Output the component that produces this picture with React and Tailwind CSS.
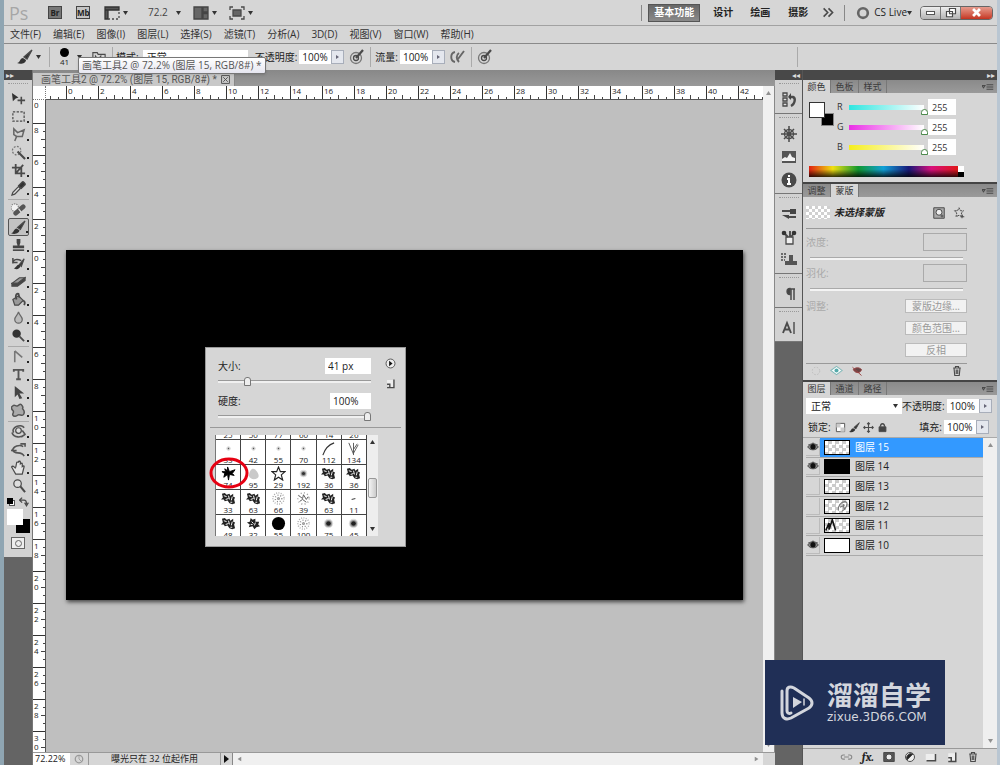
import React, { useState } from "react";

const Svg = ({ size = 16, children, className = "" }) => (
  <svg
    width={size}
    height={size}
    viewBox="0 0 16 16"
    fill="none"
    stroke="#4a4a4a"
    strokeWidth="1.3"
    className={"shrink-0 " + className}
    aria-hidden="true">
    {children}
  </svg>
);

const Caret = ({ className = "" }) => (
  <svg width="5" height="4" viewBox="0 0 5 4" className={"shrink-0 " + className} aria-hidden="true">
    <path d="M0 0h5L2.5 4z" fill="#333" />
  </svg>
);

const toolGroups = [
  [
    ["移动", <><path d="M1 2l7 5-3 1-3 3z" fill="#333" stroke="none" /><path d="M11 6v8M7 10h8" strokeWidth="1.700" /></>],
    ["选框", <rect x="2" y="3" width="12" height="10" strokeDasharray="2.500 1.500" />],
    ["套索", <><path d="M3 2l4 4 7-3-2 7-6 0-3-2zM6 10l-2 5" strokeWidth="1.600" stroke="#666" /></>],
    ["魔棒", <><circle cx="6" cy="6" r="4.500" strokeDasharray="2 1.500" stroke="#777" /><path d="M7 7l8 8" strokeWidth="2.200" /></>],
    ["裁剪", <path d="M5 1v10h10M1 5h10v10M5 11l8-9" strokeWidth="1.900" />],
    ["吸管", <><path d="M1 15l1-3 6-6 2 2-6 6z" fill="#ddd" /><path d="M8 5l3 3 4-4c1-1-2-4-3-3z" fill="#333" /></>],
  ],
  [
    ["修复画笔", <><circle cx="4" cy="6" r="4" fill="#f2f2f2" stroke="#888" strokeDasharray="1.500 1" /><path d="M5 12l8-7" strokeWidth="5" stroke="#555" strokeLinecap="round" /><path d="M8 7l3 4" stroke="#ddd" /></>],
    ["画笔", <><path d="M15 1L7 8l3 2z" fill="#333" /><path d="M0 14c3 0 3-5 6-5l3 2c0 3-5 5-9 3z" fill="#333" stroke="none" /></>],
    ["图章", <><path d="M6 1h4v4l-1 3h5v3H2V8h5L6 5z" fill="#444" stroke="none" /><path d="M2 13h12" strokeWidth="1.800" /></>],
    ["历史记录画笔", <><path d="M14 3L9 9l2 2z" fill="#333" /><path d="M3 13c2 0 3-4 6-4l1 2c-1 3-4 4-7 2z" fill="#333" stroke="none" /><path d="M2 8c0-5 5-5 9-3M2 2v5h5" strokeWidth="1.600" /></>],
    ["橡皮擦", <><path d="M1 10l8-6h6l-8 6z" fill="#999" /><path d="M1 10h6l8-6v3l-8 6H1z" fill="#444" /></>],
    ["油漆桶", <><path d="M2 8l6-4 5 5-5 5H4z" fill="#999" /><path d="M6 8c-2-4 0-7 2-6l1 4M13 9c2 1 2 3 1 5" strokeWidth="1.900" /></>],
    ["模糊", <path d="M8 2c1 4 4 5 4 8a4 4 0 01-8 0c0-3 3-4 4-8z" fill="#bbb" stroke="#666" />],
    ["减淡", <><circle cx="6" cy="6" r="4.500" fill="#333" stroke="none" /><path d="M9 9l5 5" strokeWidth="1.900" /></>],
  ],
  [
    ["钢笔", <path d="M4 2v12M4 2l8 7" stroke="#777" strokeWidth="1.700" />],
    ["文字", <path d="M3 5V3h10v2M8 3v10M5.500 13h5" stroke="#555" strokeWidth="2" />],
    ["路径选择", <path d="M4 1v12l3-3 2 5 3-1-3-5h5z" fill="#444" stroke="none" />],
    ["自定形状", <path d="M2 3c2-2 3 1 5 0s3-3 5 0-1 2 1 4 1 6-1 6-4-1-5 0-4 2-5 0 2-3 0-5-2-4 0-5z" fill="#aaa" stroke="#555" strokeWidth="1.600" />],
  ],
  [
    ["3D 旋转", <><circle cx="8" cy="7" r="3" fill="#ddd" /><path d="M3 9c-4-5 8-10 11-5M1 9c2 6 10 6 14 2M12 7l3 4-4 3" strokeWidth="1.700" stroke="#555" /></>],
    ["3D 环绕", <><path d="M2 9c0-4 7-7 11-4M2 9c2 5 9 0 12 6M10 2h5v3M4 5L1 9h5" strokeWidth="1.700" stroke="#555" /></>],
    ["抓手", <path d="M5 9L3 7c-1-1-3 0-2 1l4 7h7l2-8c0-1-1-1-2 0V4c0-1-1-1-2 0V2c0-1-2-1-2 0v1c0-1-2-1-2 0l-1 5" fill="#e4e4e4" />],
    ["缩放", <><circle cx="7" cy="6" r="4" fill="#ddd" /><path d="M10 9l5 6" strokeWidth="2.200" /></>],
  ],
];

const dockGroups = [
  [
    ["历史记录", <><path d="M2 1h4v3H2zM2 6h4v3H2zM2 11h4v3H2z" fill="#ddd" /><path d="M8 5h4c3 1 2 7-2 9" strokeWidth="2.400" /><path d="M10 1v7L7 5z" fill="#444" stroke="none" /></>],
  ],
  [
    ["导航器", <><circle cx="8" cy="8" r="4.500" /><circle cx="8" cy="8" r="1.500" fill="#333" /><path d="M8 0v16M0 8h16M3 3l10 10M13 3L3 13" strokeWidth="1.500" /></>],
    ["直方图", <><path d="M1 2h14v12H1z" fill="#555" stroke="none" /><path d="M1 10l3-2 2 1 3-5 2 4 3 1v3H1z" fill="#f2f2f2" stroke="none" /></>],
    ["信息", <><circle cx="8" cy="8" r="7.500" fill="#4a4a4a" stroke="none" /><path d="M8 3v2M6 7h2v5M6 12h4" stroke="#fff" strokeWidth="2" /></>],
  ],
  [
    ["画笔", <><path d="M1 5h8M7 11h8" strokeWidth="1.800" /><path d="M9 3h6v5H9zM1 9h7v4z" fill="#444" stroke="none" /></>],
    ["画笔预设", <><path d="M5 8h7v7H5z" fill="#eee" /><path d="M7 8L3 4M9 8V2M10 8l3-4" strokeWidth="1.900" /><circle cx="13" cy="4" r="2.300" fill="#333" stroke="none" /><circle cx="3" cy="4" r="2.300" fill="#333" stroke="none" /></>],
    ["仿制源", <><path d="M0 2h6M0 5h6M0 8h4" strokeDasharray="2 1" /><path d="M8 3h4v6h4v4H4V9h4z" fill="#555" stroke="none" /></>],
  ],
  [
    ["段落", <><path d="M10 3v11M13 3v11M14 3H8" strokeWidth="1.500" /><path d="M9 2.500a3 3 0 000 6z" fill="#444" /></>],
  ],
  [
    ["字符", <><path d="M2 13L6 3l4 10M3.500 9.500h5" strokeWidth="1.900" /><path d="M13 2v12" strokeWidth="1.400" /></>],
  ],
];

const menus = ["文件(F)", "编辑(E)", "图像(I)", "图层(L)", "选择(S)", "滤镜(T)", "分析(A)", "3D(D)", "视图(V)", "窗口(W)", "帮助(H)"];

const layers = [
  { id: 15, visible: true, kind: "checker" },
  { id: 14, visible: true, kind: "black" },
  { id: 13, visible: false, kind: "checker" },
  { id: 12, visible: false, kind: "leaf" },
  { id: 11, visible: false, kind: "strokes" },
  { id: 10, visible: true, kind: "white" },
];

const brushes = [
  ["dot", 25], ["dot", 50], ["dot", 77], ["dot", 60], ["dot", 14], ["dot", 26],
  ["dot", 33], ["dot", 42], ["dot", 55], ["dot", 70], ["blade", 112], ["grass", 134],
  ["maple", 74], ["shell", 95], ["star", 29], ["soft", 192], ["scatter", 36], ["scatter", 36],
  ["scatter", 33], ["scatter", 63], ["noise", 66], ["noise2", 39], ["scatter", 63], ["dash", 11],
  ["scatter", 48], ["scatter2", 32], ["disc", 55], ["noise", 100], ["soft2", 75], ["soft2", 45],
];

const brushShapes = {
  dot: <><circle cx="8" cy="8" r="1" fill="#555" stroke="none" /><circle cx="8" cy="8" r="1.800" stroke="#ccc" strokeWidth="1" /></>,
  blade: <path d="M2 15C4 9 8 4 14 2" stroke="#333" strokeWidth="1.200" />,
  grass: <path d="M8 15V2M8 14L3 2M8 13l5-9M8 9l4-6" stroke="#555" strokeWidth="1" />,
  maple: <path d="M7 1l2 5 6-2-3 4 2 2-5-1-1 6-1-6-4 3 1-4-3-2 4 0-1-3 3 2z" fill="#000" stroke="#000" strokeWidth="1" />,
  shell: <path d="M3 10c1-6 4-9 7-6s5 7 2 9-8 1-9-3z" fill="#c9c9c9" stroke="none" />,
  star: <path d="M8 1l2 5h5l-4 3.500 1.500 5.500L8 12l-4.500 3L5 9.500 1 6h5z" stroke="#222" strokeWidth="1.200" />,
  soft: <><circle cx="8" cy="8" r="4" fill="#ddd" stroke="none" /><circle cx="8" cy="8" r="2.800" fill="#999" stroke="none" /><circle cx="8" cy="8" r="1.700" fill="#333" stroke="none" /></>,
  soft2: <><circle cx="8" cy="8" r="5" fill="#ddd" stroke="none" /><circle cx="8" cy="8" r="3.800" fill="#999" stroke="none" /><circle cx="8" cy="8" r="2.500" fill="#222" stroke="none" /></>,
  scatter: <><path d="M1 3l3-1 2 2 3-1 1 2 3-2 0 3 2 1-1 2 1 4-3 1-3-1-2-3-3 1-1-2-3 0 2-2z" fill="#222" stroke="none" /><path d="M3 5l3 1M8 5l1 4M5 9l3-1M12 6l-1 4M10 12l2 0" stroke="#fff" strokeWidth="1" /></>,
  scatter2: <><path d="M5 2l2 2 3-1 0 3 4 0-1 3 2 2-4 1-2 2-2-3-4 1 1-3-3-2 3-1z" fill="#222" stroke="none" /><path d="M6 6l2 2M10 7l-1 3M5 9l2 0" stroke="#fff" strokeWidth="1" /></>,
  noise: <><circle cx="8" cy="8" r="6" stroke="#aaa" strokeWidth="1.500" strokeDasharray="1 1.500" /><circle cx="8" cy="8" r="3.500" stroke="#888" strokeWidth="1.500" strokeDasharray="1 2" /><circle cx="8" cy="8" r="1" stroke="#999" /></>,
  noise2: <><circle cx="8" cy="8" r="6" stroke="#999" strokeWidth="1.500" strokeDasharray="1 2.500" /><path d="M3 5l4 3 1-4 3 5 2-3M4 11l3-2 4 3" stroke="#555" strokeWidth="1" /></>,
  dash: <path d="M6 9l4-1" stroke="#444" strokeWidth="1.200" />,
  disc: <circle cx="8" cy="8" r="7" fill="#000" stroke="none" />,
};

const hTicks = Array.from({ length: 22 }, (_, i) => i * 2);
const vTicks = [8, 6, 4, 2, 0, 2, 4, 6, 8, 10, 12, 14, 16, 18, 20, 22, 24, 26, 28, 30];

const TabletIcon = () => (
  <Svg>
    <circle cx="7" cy="9" r="5.500" stroke="#777" />
    <circle cx="7" cy="9" r="2.500" />
    <path d="M7 9l7-8" strokeWidth="2.200" />
  </Svg>
);

const PercentField = ({ label, id }) => (
  <div className="flex items-center">
    <label htmlFor={id} className="mr-[2px] whitespace-nowrap">{label}</label>
    <input id={id} defaultValue="100%" className="h-[14px] w-8 bg-white pl-[3px] text-[10px]" />
    <button aria-label={label} className="flex h-[14px] w-[13px] items-center justify-center border border-[#a8aeba] bg-[#e4e7ee]">
      <svg width="3" height="4" viewBox="0 0 3 4"><path d="M0 0l3 2-3 2z" fill="#667" /></svg>
    </button>
  </div>
);

const TitleBar = () => (
  <header className="flex h-[26px] shrink-0 items-center border-b border-[#a2a2a2] pr-1 pl-[5px]">
    <span className="w-[39px] text-[18px] leading-none text-[#a6a6a6]">Ps</span>
    <button className="mr-[14px] h-[13px] w-[14px] border border-[#444] bg-[#777] text-[8px] leading-none font-bold text-[#222]">Br</button>
    <button className="mr-[14px] h-[13px] w-[14px] border border-[#444] bg-[#c4c4c4] text-[8px] leading-none font-bold text-[#222]">Mb</button>
    <button aria-label="查看额外内容" className="flex items-center gap-[3px]">
      <Svg><path d="M1 2h14v3H1zM1 5h3v9H1z" fill="#555" stroke="#333" /><path d="M4 14h11V5" strokeDasharray="2 2" /></Svg>
      <Caret />
    </button>
    <button className="ml-5 flex items-center gap-2 text-[10px] text-[#444]">72.2<Caret /></button>
    <button aria-label="排列文档" className="ml-3 flex items-center gap-[3px]">
      <Svg><path d="M1 2h8v12H1zM10 2h5v5h-5zM10 8.500h5V14h-5z" fill="#666" stroke="#444" /></Svg>
      <Caret />
    </button>
    <button aria-label="屏幕模式" className="ml-3 flex items-center gap-[3px]">
      <Svg><path d="M4 5h8v6H4z" fill="#666" /><path d="M1 5V2h3M12 2h3v3M15 11v3h-3M4 14H1v-3" /></Svg>
      <Caret />
    </button>
    <div className="ml-auto flex items-center text-[10px] font-bold text-[#222]">
      <span className="mr-[6px] h-4 w-px bg-[#888]" />
      <button className="h-[18px] w-[52px] border border-[#555] bg-gradient-to-b from-[#686868] to-[#8a8a8a] whitespace-nowrap text-white">基本功能</button>
      <button className="ml-[13px]">设计</button>
      <button className="ml-[17px]">绘画</button>
      <button className="ml-[18px]">摄影</button>
      <button aria-label="更多" className="ml-[14px]">
        <Svg size={13}><path d="M2 3l5 5-5 5M8 3l5 5-5 5" strokeWidth="2" /></Svg>
      </button>
      <span className="mr-[11px] ml-[9px] h-4 w-px bg-[#888]" />
      <Svg size={14}><circle cx="8" cy="8" r="5.500" stroke="#666" strokeWidth="3" /></Svg>
      <button className="ml-1 flex items-center font-normal whitespace-nowrap">CS Live<Caret /></button>
      <div className="ml-2 flex h-[14px] overflow-hidden rounded-sm border border-[#666]">
        <button aria-label="最小化" className="flex w-5 items-center justify-center border-r border-[#777] bg-gradient-to-b from-[#eee] to-[#b4b4b4]">
          <span className="h-1 w-[9px] border border-[#555] bg-white" />
        </button>
        <button aria-label="还原" className="flex w-5 items-center justify-center border-r border-[#777] bg-gradient-to-b from-[#eee] to-[#b4b4b4]">
          <Svg size={12}><path d="M6 2h8v7h-8zM2 6h8v7H2z" fill="#fff" strokeWidth="1.600" /></Svg>
        </button>
        <button aria-label="关闭" className="flex w-[31px] items-center justify-center bg-gradient-to-b from-[#e69a8c] to-[#c43320]">
          <Svg size={11}><path d="M3 3l10 10M13 3L3 13" stroke="#fff" strokeWidth="4" /></Svg>
        </button>
      </div>
    </div>
  </header>
);

const MenuBar = () => (
  <nav className="flex h-[18px] shrink-0 items-center gap-3 border-b border-[#8a8a8a] pl-[6px] text-[10px] text-[#333]">
    {menus.map((m) => (
      <button key={m} className="whitespace-nowrap">{m}</button>
    ))}
  </nav>
);

const Divider = () => <span className="h-5 w-px shrink-0 bg-[#aaa]" />;

const OptionsBar = () => (
  <div className="relative flex h-[26px] shrink-0 items-center pl-[13px] text-[10px] text-[#222]">
    <button aria-label="画笔工具" className="flex w-[32px] items-center gap-[3px]">
      <Svg>{toolGroups[1][1][1]}</Svg>
      <Caret />
    </button>
    <Divider />
    <button aria-label="画笔大小" className="flex w-[42px] items-center gap-2 pl-[10px]">
      <span className="flex flex-col items-center text-[8px] leading-[9px]">
        <span className="size-[9px] rounded-full bg-black" />
        41
      </span>
      <Caret />
    </button>
    <button aria-label="切换画笔面板" className="w-[20px]">
      <Svg size={14}><path d="M1 3h5l1 2h8v9H1z" /><path d="M4 12V7l3 4 3-4v5" /></Svg>
    </button>
    <Divider />
    <label htmlFor="mode" className="mr-1 ml-[3px] whitespace-nowrap">模式:</label>
    <select id="mode" className="mr-[7px] h-[14px] w-[105px] appearance-none bg-white pl-1 text-[10px] leading-none">
      <option>正常</option>
    </select>
    <PercentField label="不透明度:" id="opt-opacity" />
    <button aria-label="压力控制不透明度" className="mx-[5px]"><TabletIcon /></button>
    <Divider />
    <span className="w-1" />
    <PercentField label="流量:" id="opt-flow" />
    <button aria-label="喷枪" className="mx-[5px]">
      <Svg><path d="M5 3c-5 1-5 9 0 10M9 13c-3-3-3-7 0-9M8 10l6-8" strokeWidth="1.900" stroke="#666" /></Svg>
    </button>
    <Divider />
    <button aria-label="压力控制大小" className="mx-[5px]"><TabletIcon /></button>
    <span className="mr-[199px] ml-auto h-5 w-px bg-[#aaa]" />
    <div role="tooltip" className="absolute top-[13px] left-[74px] z-20 flex h-[17px] items-center rounded-xs border border-[#777] bg-gradient-to-b from-white to-[#e6e6f0] px-[3px] text-[10px] whitespace-nowrap text-[#555] shadow">
      画笔工具2 @ 72.2% (图层 15, RGB/8#) *
    </div>
  </div>
);

const Toolbox = () => (
  <aside className="flex w-[29px] shrink-0 flex-col border-r border-[#777] bg-[#646464]">
    <div className="flex h-[10px] items-center bg-[#484848] pl-[2px] text-[8px] leading-none text-[#ddd]">▸▸</div>
    <div className="flex flex-col items-center bg-[#d2d2d2] pb-2">
      <div className="mt-[3px] mb-1 h-[2px] w-5 border-t border-dotted border-[#999]" />
      {toolGroups.map((group, i) => (
        <div key={i} className={"flex flex-col " + (i > 0 ? "mt-[2px] border-t border-[#aaa]" : "")}>
          {group.map(([name, icon]) => (
            <button
              key={name}
              aria-label={name}
              className={
                "relative flex h-[18px] w-[21px] items-center justify-center rounded-xs " +
                (name === "画笔" ? "border border-[#555] bg-[#c2c2c2]" : "")
              }>
              <Svg size={15}>{icon}</Svg>
              {name !== "移动" && name !== "缩放" && (
                <span className="absolute right-0 bottom-[2px] size-[2px] bg-[#222]" />
              )}
            </button>
          ))}
        </div>
      ))}
      <div className="flex h-[15px] w-[22px] items-center justify-between">
        <button aria-label="默认颜色" className="relative size-2">
          <span className="absolute right-0 bottom-0 size-[6px] border border-[#555] bg-white" />
          <span className="absolute top-0 left-0 size-[6px] bg-black" />
        </button>
        <button aria-label="切换颜色">
          <Svg size={10}><path d="M2 5h6c3 0 4 2 4 6M5 1L1 5l4 4M9 9l3 5 3-5" strokeWidth="2" /></Svg>
        </button>
      </div>
      <div className="relative h-[26px] w-[23px]">
        <button aria-label="背景色" className="absolute right-0 bottom-[2px] size-[14px] bg-black" />
        <button aria-label="前景色" className="absolute top-0 left-0 size-4 bg-white" />
      </div>
      <button aria-label="快速蒙版" className="mt-[2px] flex h-3 w-[14px] items-center justify-center border border-[#666] bg-[#eee]">
        <span className="size-[7px] rounded-full border border-[#666]" />
      </button>
    </div>
  </aside>
);

const HRuler = () => (
  <div className="flex h-[14px] min-w-0 flex-1 overflow-hidden border-b border-[#555] bg-white text-[8px] leading-[9px] text-[#222]">
    <div className="flex w-5 shrink-0 items-end gap-[7px] pl-1">
      <span className="h-[3px] w-px bg-[#444]" />
      <span className="h-[2px] w-px bg-[#444]" />
    </div>
    {hTicks.map((n) => (
      <div key={n} className="relative w-8 shrink-0 border-l border-[#333] pl-px">
        {n}
        <div className="absolute inset-x-0 bottom-0 flex items-end gap-[7px] pl-[7px]">
          <span className="h-[2px] w-px bg-[#444]" />
          <span className="h-1 w-px bg-[#444]" />
          <span className="h-[2px] w-px bg-[#444]" />
        </div>
      </div>
    ))}
  </div>
);

const VRuler = () => (
  <div className="flex w-[13px] shrink-0 flex-col overflow-hidden border-r border-[#555] bg-white text-[8px] leading-[9px] text-[#222]">
    <div className="h-[23px] shrink-0 pl-px">0</div>
    {vTicks.map((n, i) => (
      <div key={i} className="relative flex h-8 shrink-0 flex-col border-t border-[#333] pt-px pl-px">
        {String(n).split("").map((d, k) => <span key={k}>{d}</span>)}
        <div className="absolute inset-y-0 right-0 flex flex-col items-end gap-[7px] pt-[7px]">
          <span className="h-px w-[2px] bg-[#444]" />
          <span className="h-px w-1 bg-[#444]" />
          <span className="h-px w-[2px] bg-[#444]" />
        </div>
      </div>
    ))}
  </div>
);

const BrushSlider = ({ label, value, unit, width, max }) => {
  const id = "brush-" + unit;
  return (
    <div className="pr-[34px] pl-3">
      <div className="flex h-[16px] items-center justify-between text-[10px]">
        <label htmlFor={id}>{label}</label>
        <input id={id} defaultValue={value} className={"h-4 bg-white pl-[3px] " + width} />
      </div>
      <input
        type="range"
        aria-label={label}
        defaultValue={max}
        className="mt-[3px] block h-[9px] w-full appearance-none bg-transparent [&::-webkit-slider-runnable-track]:h-[3px] [&::-webkit-slider-runnable-track]:border-t [&::-webkit-slider-runnable-track]:border-[#999] [&::-webkit-slider-runnable-track]:bg-[#f0f0f0] [&::-webkit-slider-thumb]:-mt-[4px] [&::-webkit-slider-thumb]:h-[9px] [&::-webkit-slider-thumb]:w-[7px] [&::-webkit-slider-thumb]:appearance-none [&::-webkit-slider-thumb]:rounded-t-[3px] [&::-webkit-slider-thumb]:border [&::-webkit-slider-thumb]:border-[#777] [&::-webkit-slider-thumb]:bg-[#eee]"
      />
    </div>
  );
};

const BrushPicker = () => (
  <div className="absolute top-[97px] left-[139px] h-[200px] w-[201px] border border-[#999] bg-[#d6d6d6] text-[#222]">
    <div className="flex flex-col gap-[7px] pt-[10px]">
      <BrushSlider label="大小:" value="41 px" unit="size" width="w-[46px]" max={18} />
      <BrushSlider label="硬度:" value="100%" unit="hardness" width="w-[41px]" max={100} />
    </div>
    <div className="absolute top-[10px] right-[9px] flex flex-col items-center gap-[9px]">
      <button aria-label="菜单" className="block">
        <Svg size={11}><circle cx="8" cy="8" r="6.500" fill="#eee" /><path d="M6 4l5 4-5 4z" fill="#111" stroke="none" /></Svg>
      </button>
      <button aria-label="新建预设" className="block">
        <Svg size={11}><path d="M3 3h10v10H7L3 9z" fill="#eee" stroke="none" /><path d="M13 2v12H3M3 9h4v4" strokeWidth="2" /></Svg>
      </button>
    </div>
    <div className="mx-1 mt-[6px] border-t border-[#999]" />
    <div className="mt-[7px] ml-[9px] flex h-[101px] w-[163px] border-l border-[#777]">
      <div className="flex w-[151px] flex-col justify-start overflow-hidden bg-white">
        <div className="-mt-5 grid shrink-0 grid-cols-6">
          {brushes.map(([kind, size], i) => (
            <button
              key={i}
              className="flex h-[25px] flex-col items-center overflow-hidden border-r border-b border-[#444] pt-px text-[8px] leading-[8px]">
              <Svg size={15}>{brushShapes[kind]}</Svg>
              {size}
            </button>
          ))}
        </div>
      </div>
      <div className="flex flex-1 flex-col items-center bg-[#eee] py-[5px]">
        <Caret className="rotate-180" />
        <span className="mt-[34px] h-5 w-[9px] rounded-xs border border-[#999] bg-gradient-to-r from-[#f4f4f4] to-[#ccc]" />
        <span className="flex-1" />
        <Caret />
      </div>
    </div>
    <svg width="40" height="34" viewBox="0 0 40 34" className="absolute top-[108px] left-[3px]" aria-hidden="true">
      <ellipse cx="20" cy="17" rx="18" ry="14" fill="none" stroke="#e60012" strokeWidth="3" />
    </svg>
  </div>
);

const DocumentWindow = () => (
  <main className="flex min-w-0 flex-1 flex-col bg-[#bfbfbf]">
    <div className="flex h-4 shrink-0 items-end bg-gradient-to-b from-[#888] to-[#999]">
      <div className="flex h-[13px] items-center gap-1 border-r border-[#888] bg-[#c8c8c8] pr-1 pl-2 font-[family-name:Roboto,'Noto_Sans_CJK_SC',sans-serif] text-[10px] whitespace-nowrap text-[#555]">
        画笔工具2 @ 72.2% (图层 15, RGB/8#) *
        <button aria-label="关闭文档">
          <Svg size={9}><path d="M1 1h14v14H1zM4 4l8 8M12 4l-8 8" strokeWidth="1.600" /></Svg>
        </button>
      </div>
    </div>
    <div className="flex min-h-0 flex-1">
      <div className="flex min-w-0 flex-1 flex-col">
        <div className="flex shrink-0">
          <div className="h-[14px] w-[13px] shrink-0 border-r border-b border-dotted border-[#777] bg-white" />
          <HRuler />
        </div>
        <div className="flex min-h-0 flex-1">
          <VRuler />
          <div className="min-w-0 flex-1 overflow-hidden px-5 pt-[150px]">
            <div className="relative h-[350px] bg-black shadow-[1px_2px_4px_#444]">
              <BrushPicker />
            </div>
          </div>
        </div>
      </div>
      <div className="flex w-[12px] shrink-0 flex-col items-center justify-between border-r border-[#888] bg-[#f0f0f0] py-[5px]">
        <Caret className="rotate-180 opacity-50" />
        <Caret className="opacity-50" />
      </div>
    </div>
    <footer className="flex h-[13px] shrink-0 items-center border-t border-[#999] bg-[#d6d6d6] text-[9px] text-[#222]">
      <input aria-label="缩放比例" defaultValue="72.22%" className="h-3 w-[37px] bg-white pl-[2px]" />
      <span className="flex w-[18px] justify-center">
        <Svg size={10}><circle cx="8" cy="8" r="6" stroke="#999" strokeWidth="2" /><path d="M8 8l5 5M8 3v5" stroke="#999" /></Svg>
      </span>
      <span className="w-[133px] border-x border-[#999] text-center leading-[12px]">曝光只在 32 位起作用</span>
      <button aria-label="状态菜单" className="flex w-[11px] justify-center">
        <svg width="5" height="8" viewBox="0 0 5 8"><path d="M0 0l5 4-5 4z" fill="#111" /></svg>
      </button>
      <div className="mr-3 flex h-3 flex-1 items-center justify-between border-l border-[#888] bg-[#f0f0f0] px-1">
        <Caret className="rotate-90 opacity-50" />
        <Caret className="-rotate-90 opacity-50" />
      </div>
    </footer>
  </main>
);

const Dock = () => (
  <aside className="flex w-[28px] shrink-0 flex-col border-r border-[#555] bg-[#646464]">
    <div className="h-[10px] bg-[#484848] pr-[2px] text-right text-[8px] leading-[9px] text-[#ddd]">◂◂</div>
    {dockGroups.map((items, i) => (
      <div key={i} className="flex flex-col items-center border-b border-[#777] bg-[#d2d2d2] pb-[2px]">
        <div className="mt-[3px] mb-[3px] h-[2px] w-5 border-t border-dotted border-[#999]" />
        {items.map(([name, icon]) => (
          <button key={name} aria-label={name} className="flex h-[23px] items-center justify-center">
            <Svg>{icon}</Svg>
          </button>
        ))}
      </div>
    ))}
  </aside>
);

const PanelTabs = ({ tabs, active }) => (
  <div className="flex h-[13px] shrink-0 items-stretch bg-gradient-to-b from-[#8a8a8a] to-[#9a9a9a] text-[9px]">
    {tabs.map((t) => (
      <button
        key={t}
        className={
          "w-7 border-r border-[#777] leading-[12px] whitespace-nowrap " +
          (t === active ? "bg-[#d6d6d6] text-[#333]" : "text-[#3c3c3c]")
        }>
        {t}
      </button>
    ))}
    <button aria-label="面板菜单" className="mr-[3px] ml-auto flex items-center">
      <Svg size={12}><path d="M0 6h4L2 9zM6 5h9M6 8h9M6 11h9" strokeWidth="1.400" /></Svg>
    </button>
  </div>
);

const channelSlider =
  "mt-px h-[5px] w-[79px] appearance-none bg-[length:75px_5px] bg-no-repeat [&::-webkit-slider-thumb]:mt-[9px] [&::-webkit-slider-thumb]:h-[6px] [&::-webkit-slider-thumb]:w-[7px] [&::-webkit-slider-thumb]:appearance-none [&::-webkit-slider-thumb]:rounded-t-full [&::-webkit-slider-thumb]:border [&::-webkit-slider-thumb]:border-[#4d8a4d] [&::-webkit-slider-thumb]:bg-white ";

const channels = [
  ["R", "bg-[linear-gradient(to_right,#2fe6e0,#fff)]"],
  ["G", "bg-[linear-gradient(to_right,#ea2fe6,#fff)]"],
  ["B", "bg-[linear-gradient(to_right,#f5ee1c,#fff)]"],
];

const ColorPanel = () => (
  <section>
    <PanelTabs tabs={["颜色", "色板", "样式"]} active="颜色" />
    <div className="h-[91px] border-b-2 border-[#444] pt-[6px] pl-[6px]">
      <div className="flex">
        <div className="relative mt-[3px] h-6 w-[28px]">
          <button aria-label="背景色" className="absolute right-[3px] bottom-0 size-[13px] border border-[#888] bg-black" />
          <button aria-label="前景色" className="absolute top-0 left-0 size-4 border border-[#333] bg-white" />
        </div>
        <div className="flex flex-col gap-1">
          {channels.map(([name, gradient]) => (
            <div key={name} className="flex h-4 items-center text-[9px] text-[#333]">
              <label htmlFor={"ch-" + name} className="w-3">{name}</label>
              <input type="range" aria-label={name} min="0" max="255" defaultValue="255" className={channelSlider + gradient} />
              <input id={"ch-" + name} defaultValue="255" className="h-4 w-[28px] bg-white pl-1" />
            </div>
          ))}
        </div>
      </div>
      <div className="mt-[11px] flex h-[11px] w-[155px]">
        <div className="flex-1 bg-[linear-gradient(to_bottom,transparent_30%,#000c),linear-gradient(to_right,#e02010,#f0e010_16%,#109830_33%,#10a0d8_50%,#181878_67%,#d8107c_82%,#e01818)]" />
        <div className="w-[6px] bg-[linear-gradient(to_bottom,#fff_50%,#000_50%)]" />
      </div>
    </div>
  </section>
);

const MaskRow = ({ label, id }) => (
  <div className="mb-[3px]">
    <div className="flex h-[18px] items-center justify-between">
      <label htmlFor={id} className="text-[#aaa]">{label}</label>
      <input id={id} disabled className="h-[18px] w-[44px] border border-[#aaa] bg-[#d6d6d6]" />
    </div>
    <input
      type="range"
      aria-label={label}
      disabled
      className="mx-1 mt-1 block h-[6px] w-[153px] appearance-none [&::-webkit-slider-runnable-track]:h-[3px] [&::-webkit-slider-runnable-track]:border-t [&::-webkit-slider-runnable-track]:border-[#aaa] [&::-webkit-slider-runnable-track]:bg-[#f4f4f4] [&::-webkit-slider-thumb]:appearance-none"
    />
  </div>
);

const MaskPanel = () => (
  <section className="text-[10px]">
    <PanelTabs tabs={["调整", "蒙版"]} active="蒙版" />
    <div className="h-[185px] border-b-2 border-[#444] pr-[30px] pl-[3px]">
      <div className="flex h-8 items-center border-b border-[#999]">
        <span className="h-[13px] w-6 bg-[repeating-conic-gradient(#d0d0d0_0_25%,#fff_0_50%)] bg-[length:6px_6px]" />
        <span className="ml-1 font-bold text-[#222] italic">未选择蒙版</span>
        <button aria-label="像素蒙版" className="mr-2 ml-auto">
          <Svg size={12}><path d="M1 1h14v14H1z" fill="#aaa" /><circle cx="8" cy="7" r="4" fill="#eee" /><path d="M10 12h4M12 10v4" /></Svg>
        </button>
        <button aria-label="矢量蒙版" className="mr-[2px]">
          <Svg size={12}><path d="M2 5l4 0 2-4 2 4 4 0-3 3 2 5-5-2-4 2 1-5z" strokeDasharray="3 1" /><path d="M10 13h5M12 10v5" /></Svg>
        </button>
      </div>
      <div className="h-1" />
      <MaskRow label="浓度:" id="mask-density" />
      <MaskRow label="羽化:" id="mask-feather" />
      <div className="flex justify-between pt-1">
        <span className="text-[#aaa]">调整:</span>
        <div className="flex w-[62px] flex-col gap-2">
          {["蒙版边缘...", "颜色范围...", "反相"].map((b) => (
            <button key={b} className="h-[14px] border border-[#bbb] bg-[#f2f2f2] leading-[12px] whitespace-nowrap text-[#999]">{b}</button>
          ))}
        </div>
      </div>
      <div className="mt-[6px] flex h-[14px] items-center gap-2 border-t border-[#999] pl-1">
        <button aria-label="载入选区"><Svg size={12}><circle cx="8" cy="8" r="5" stroke="#bbb" strokeDasharray="2 2" /></Svg></button>
        <button aria-label="应用蒙版"><Svg size={13}><path d="M1 8l7-5 7 5-7 5z" fill="#fff" stroke="#8bb" /><circle cx="8" cy="8" r="2.500" fill="#5aa" stroke="none" /></Svg></button>
        <button aria-label="停用蒙版"><Svg size={12}><path d="M2 3l12 11M3 6c3-3 8-3 11 0-1 5-8 6-11 0z" stroke="#944" fill="#644" /></Svg></button>
        <button aria-label="删除蒙版" className="mr-1 ml-auto"><TrashIcon /></button>
      </div>
    </div>
  </section>
);

const TrashIcon = () => (
  <Svg size={12}><path d="M3 4h10M6 4V2h4v2M4 4l1 10h6l1-10M7 6v6M9 6v6" strokeWidth="1.500" /></Svg>
);

const EyeIcon = () => (
  <Svg size={12}><path d="M1 8c3-6 11-6 14 0-3 5-11 5-14 0z" fill="#888" /><circle cx="8" cy="7.500" r="3.500" fill="#111" stroke="none" /><path d="M2 4l2 2M8 2v2M14 4l-2 2" /></Svg>
);

const thumbStyle = {
  checker: "bg-[repeating-conic-gradient(#ccc_0_25%,#fff_0_50%)] bg-[length:7px_7px]",
  leaf: "bg-[repeating-conic-gradient(#ccc_0_25%,#fff_0_50%)] bg-[length:7px_7px]",
  strokes: "bg-[repeating-conic-gradient(#ccc_0_25%,#fff_0_50%)] bg-[length:7px_7px]",
  black: "bg-black",
  white: "bg-white",
};

const LayersPanel = () => {
  const [active, setActive] = useState(15);
  return (
    <section className="flex min-h-0 flex-1 flex-col text-[10px] text-[#222]">
      <PanelTabs tabs={["图层", "通道", "路径"]} active="图层" />
      <div className="flex h-[22px] items-center justify-between pr-2 pl-[3px]">
        <div className="relative flex items-center">
          <select aria-label="混合模式" className="h-4 w-[96px] appearance-none bg-white pl-[5px] leading-none">
            <option>正常</option>
          </select>
          <Caret className="pointer-events-none absolute right-1" />
        </div>
        <PercentField label="不透明度:" id="layer-opacity" />
      </div>
      <div className="flex h-[21px] items-center border-b border-[#aaa] pr-2 pl-[5px]">
        <span className="mr-1">锁定:</span>
        <div className="flex gap-[3px]">
          <button aria-label="锁定透明像素"><Svg size={11}><path d="M2 2h12v12H2z" fill="#fff" /><path d="M2 2h6v6H2zM8 8h6v6H8z" fill="#ccc" stroke="none" /></Svg></button>
          <button aria-label="锁定图像像素"><Svg size={11}>{toolGroups[1][1][1]}</Svg></button>
          <button aria-label="锁定位置"><Svg size={11}><path d="M8 1v14M1 8h14M6 3l2-2 2 2M6 13l2 2 2-2M3 6L1 8l2 2M13 6l2 2-2 2" strokeWidth="1.600" /></Svg></button>
          <button aria-label="锁定全部"><Svg size={11}><path d="M3 7h10v7H3z" fill="#444" /><path d="M5 7c0-6 6-6 6 0" strokeWidth="2" /></Svg></button>
        </div>
        <div className="ml-auto"><PercentField label="填充:" id="layer-fill" /></div>
      </div>
      <div className="flex min-h-0 flex-1">
        <ul className="grid h-[118px] min-w-0 flex-1 grid-rows-6 pl-[3px]">
          {layers.map((l) => (
            <li key={l.id} className="flex items-stretch border-b border-[#aaa]">
              <button aria-label={"显示图层 " + l.id} className="my-px flex w-[14px] items-center justify-center border-r border-b border-[#bbb]">
                {l.visible && <EyeIcon />}
              </button>
              <button
                onClick={() => setActive(l.id)}
                className={
                  "flex flex-1 items-center gap-[5px] pl-1 " +
                  (l.id === active ? "bg-[#3399ff] text-white" : "")
                }>
                <span className={"flex h-[15px] w-[26px] items-center border border-black " + thumbStyle[l.kind]}>
                  {l.kind === "strokes" && <Svg size={13}><path d="M1 14l4-9 0 8 4-12 4 13" stroke="#111" strokeWidth="2" /></Svg>}
                  {l.kind === "leaf" && <Svg size={13} className="ml-auto"><path d="M3 13c-1-5 3-11 8-11s2 9-4 12M5 9l6-3M9 5l1 6" stroke="#777" /></Svg>}
                </span>
                图层 {l.id}
              </button>
            </li>
          ))}
        </ul>
        <div className="flex w-[14px] flex-col items-center justify-between bg-[#efefef] py-[5px]">
          <Caret className="rotate-180 opacity-50" />
          <Caret className="opacity-50" />
        </div>
      </div>
      <div className="flex h-[17px] shrink-0 items-center justify-end gap-[9px] border-t border-[#999] pr-[18px]">
        <button aria-label="链接图层"><Svg size={13}><path d="M6 10H4a2 2 0 010-5h2M10 5h2a2 2 0 010 5h-2M5 7.500h6" stroke="#888" /></Svg></button>
        <button className="font-serif text-[12px] leading-none font-bold italic">fx.</button>
        <button aria-label="图层蒙版"><Svg size={12}><path d="M1 2h14v12H1z" fill="#555" /><circle cx="8" cy="8" r="4" fill="#eee" /></Svg></button>
        <button aria-label="调整图层"><Svg size={12}><circle cx="8" cy="8" r="6" fill="#eee" /><path d="M4 12A6 6 0 0112 4z" fill="#222" /></Svg></button>
        <button aria-label="新建组"><Svg size={12}><path d="M1 4h14v9H1z" fill="#eee" stroke="none" /><path d="M14 4v9H2" strokeWidth="2" /></Svg></button>
        <button aria-label="新建图层"><Svg size={12}><path d="M3 3h10v10H3z" fill="#eee" stroke="none" /><path d="M13 2v12H3M3 9h4v4" strokeWidth="2" /></Svg></button>
        <button aria-label="删除图层"><TrashIcon /></button>
      </div>
    </section>
  );
};

const Watermark = () => (
  <div className="absolute right-[52px] bottom-5 z-30 flex h-[85px] w-[180px] items-center bg-[#202f56] pl-[14px] text-[#d3d6dd]">
    <svg width="36" height="38" viewBox="0 0 36 38" fill="none" stroke="currentColor" strokeWidth="3" strokeLinecap="round" aria-hidden="true">
      <path d="M3 7v22c0 6 5 7 9 5l18-10c4-3 4-7 0-10L15 4C11 2 8 3 8 7v20c0 2 2 3 4 2" strokeLinejoin="round" />
      <path d="M14 13l9 5-9 6z" fill="currentColor" stroke="none" />
      <path d="M25 15v6" strokeWidth="1.500" />
    </svg>
    <div className="ml-3">
      <div className="text-[26px] leading-[28px] font-bold whitespace-nowrap">溜溜自学</div>
      <div className="font-[family-name:'DejaVu_Sans',sans-serif] text-[12px] leading-[16px]">zixue.3D66.COM</div>
    </div>
  </div>
);

export default function App() {
  return (
    <div className="relative flex h-screen flex-col overflow-hidden border-r-3 border-l-4 border-r-[#b9c6d2] border-l-[#8fa5b2] bg-[#d6d6d6] font-[family-name:'Open_Sans','Noto_Sans_CJK_SC',sans-serif]">
      <TitleBar />
      <MenuBar />
      <OptionsBar />
      <div className="flex min-h-0 flex-1">
        <Toolbox />
        <DocumentWindow />
        <Dock />
        <div className="flex w-[194px] shrink-0 flex-col">
          <div className="h-[10px] shrink-0 bg-[#484848] pr-[2px] text-right text-[8px] leading-[9px] text-[#ddd]">▸▸</div>
          <ColorPanel />
          <MaskPanel />
          <LayersPanel />
        </div>
      </div>
      <Watermark />
    </div>
  );
}
